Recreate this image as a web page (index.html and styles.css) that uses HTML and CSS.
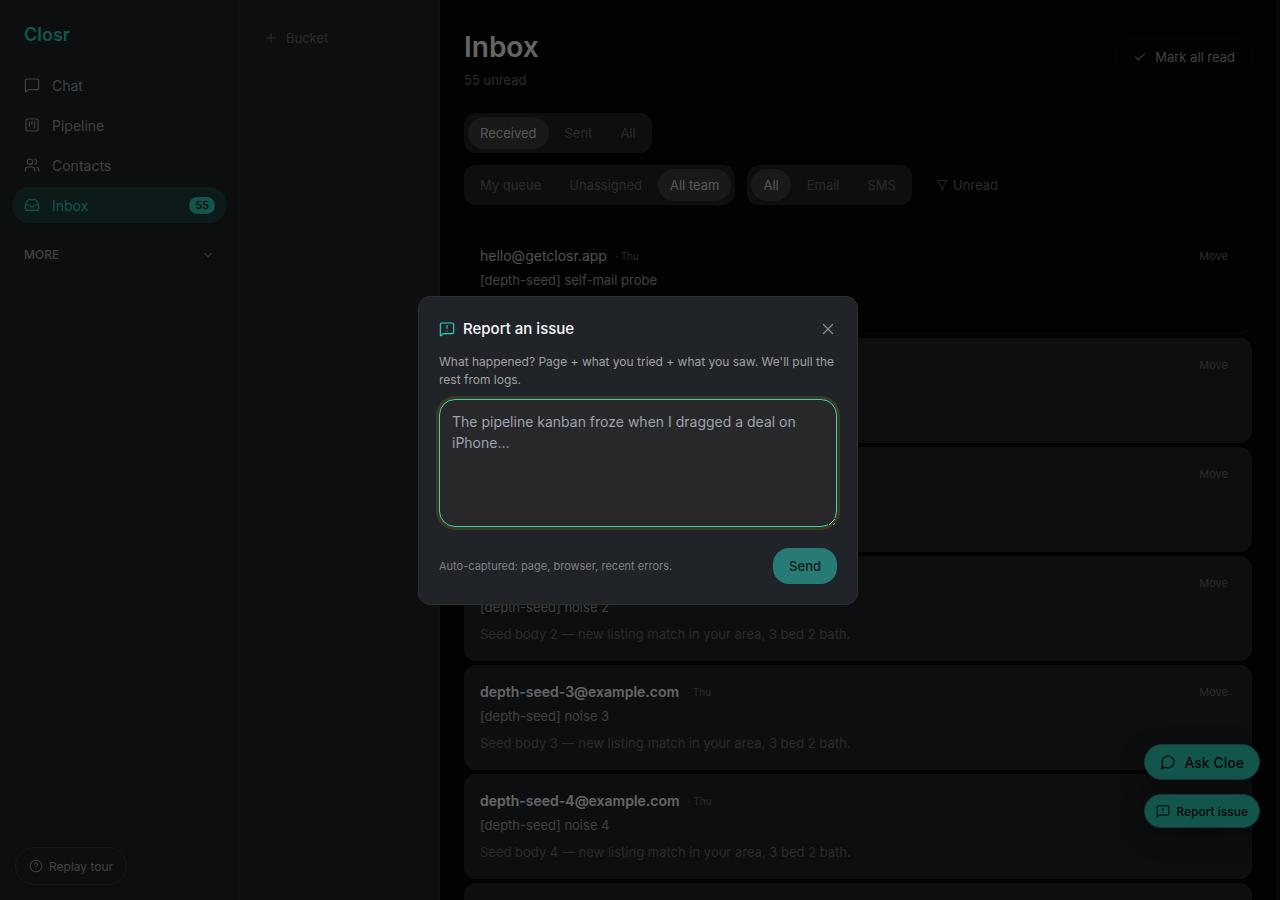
FILE: index.html
```
<!DOCTYPE html>
<html lang="en">
<head>
    <meta charset="UTF-8">
    <meta name="viewport" content="width=device-width, initial-scale=1.0">
    <title>Closr - Inbox</title>
    <link rel="stylesheet" href="styles.css">
</head>
<body>
    <svg class="icon-defs" aria-hidden="true">
        <symbol id="icon-report" viewBox="0 0 24 24">
            <path d="M22 17a2 2 0 0 1-2 2H6.828a2 2 0 0 0-1.414.586l-2.202 2.202A.71.71 0 0 1 2 21.286V5a2 2 0 0 1 2-2h16a2 2 0 0 1 2 2z"/>
            <path d="M12 7v4M12 15h.01"/>
        </symbol>
    </svg>

    <div class="app">
        <aside class="sidebar">
            <a class="brand" href="#">Closr</a>
            <nav class="nav">
                <a class="nav-item" href="#">
                    <svg class="icon" viewBox="0 0 24 24"><path d="M22 17a2 2 0 0 1-2 2H6.828a2 2 0 0 0-1.414.586l-2.202 2.202A.71.71 0 0 1 2 21.286V5a2 2 0 0 1 2-2h16a2 2 0 0 1 2 2z"/></svg>
                    Chat
                </a>
                <a class="nav-item" href="#">
                    <svg class="icon" viewBox="0 0 24 24"><rect x="3" y="3" width="18" height="18" rx="2"/><path d="M8 7v7M12 7v4M16 7v9"/></svg>
                    Pipeline
                </a>
                <a class="nav-item" href="#">
                    <svg class="icon" viewBox="0 0 24 24"><path d="M16 21v-2a4 4 0 0 0-4-4H6a4 4 0 0 0-4 4v2"/><circle cx="9" cy="7" r="4"/><path d="M22 21v-2a4 4 0 0 0-3-3.87M16 3.13a4 4 0 0 1 0 7.75"/></svg>
                    Contacts
                </a>
                <a class="nav-item active" href="#">
                    <svg class="icon" viewBox="0 0 24 24"><path d="M22 12h-6l-2 3h-4l-2-3H2"/><path d="M5.45 5.11 2 12v6a2 2 0 0 0 2 2h16a2 2 0 0 0 2-2v-6l-3.45-6.89A2 2 0 0 0 16.76 4H7.24a2 2 0 0 0-1.79 1.11z"/></svg>
                    Inbox
                    <span class="badge">55</span>
                </a>
            </nav>
            <button class="more" type="button">
                MORE
                <svg class="icon" viewBox="0 0 24 24"><path d="m6 9 6 6 6-6"/></svg>
            </button>
            <button class="replay" type="button">
                <svg class="icon" viewBox="0 0 24 24"><circle cx="12" cy="12" r="10"/><path d="M9.09 9a3 3 0 0 1 5.83 1c0 2-3 3-3 3M12 17h.01"/></svg>
                Replay tour
            </button>
        </aside>

        <aside class="buckets">
            <button class="add-bucket" type="button">
                <svg class="icon" viewBox="0 0 24 24"><path d="M5 12h14M12 5v14"/></svg>
                Bucket
            </button>
        </aside>

        <main class="main">
            <header class="page-header">
                <div>
                    <h1>Inbox</h1>
                    <p class="unread-count">55 unread</p>
                </div>
                <button class="mark-read" type="button">
                    <svg class="icon" viewBox="0 0 24 24"><path d="M20 6 9 17l-5-5"/></svg>
                    Mark all read
                </button>
            </header>

            <div class="filters">
                <div class="filter-row">
                    <div class="segmented">
                        <button class="selected" type="button">Received</button>
                        <button type="button">Sent</button>
                        <button type="button">All</button>
                    </div>
                </div>
                <div class="filter-row">
                    <div class="segmented">
                        <button type="button">My queue</button>
                        <button type="button">Unassigned</button>
                        <button class="selected" type="button">All team</button>
                    </div>
                    <div class="segmented">
                        <button class="selected" type="button">All</button>
                        <button type="button">Email</button>
                        <button type="button">SMS</button>
                    </div>
                    <button class="unread-filter" type="button">
                        <svg class="icon" viewBox="0 0 24 24"><path d="M10 20a1 1 0 0 0 .553.895l2 1A1 1 0 0 0 14 21v-7a2 2 0 0 1 .517-1.341L21.74 4.67A1 1 0 0 0 21 3H3a1 1 0 0 0-.742 1.67l7.225 7.989A2 2 0 0 1 10 14z"/></svg>
                        Unread
                    </button>
                </div>
            </div>

            <div class="thread-list">
                <article class="thread read">
                    <div class="thread-top">
                        <span class="sender">hello@getclosr.app</span>
                        <span class="date">· Thu</span>
                        <button class="move" type="button">Move</button>
                    </div>
                    <p class="subject">[depth-seed] self-mail probe</p>
                </article>
                <article class="thread">
                    <div class="thread-top">
                        <button class="move" type="button">Move</button>
                    </div>
                </article>
                <article class="thread">
                    <div class="thread-top">
                        <button class="move" type="button">Move</button>
                    </div>
                </article>
                <article class="thread">
                    <div class="thread-top">
                        <button class="move" type="button">Move</button>
                    </div>
                    <p class="subject">[depth-seed] noise 2</p>
                    <p class="preview">Seed body 2 — new listing match in your area, 3 bed 2 bath.</p>
                </article>
                <article class="thread">
                    <div class="thread-top">
                        <span class="sender">depth-seed-3@example.com</span>
                        <span class="date">· Thu</span>
                        <button class="move" type="button">Move</button>
                    </div>
                    <p class="subject">[depth-seed] noise 3</p>
                    <p class="preview">Seed body 3 — new listing match in your area, 3 bed 2 bath.</p>
                </article>
                <article class="thread">
                    <div class="thread-top">
                        <span class="sender">depth-seed-4@example.com</span>
                        <span class="date">· Thu</span>
                    </div>
                    <p class="subject">[depth-seed] noise 4</p>
                    <p class="preview">Seed body 4 — new listing match in your area, 3 bed 2 bath.</p>
                </article>
                <article class="thread"></article>
            </div>
        </main>
    </div>

    <div class="floating">
        <button class="fab ask" type="button">
            <svg class="icon" viewBox="0 0 24 24"><path d="M7.9 20A9 9 0 1 0 4 16.1L2 22z"/></svg>
            Ask Cloe
        </button>
        <button class="fab report" type="button">
            <svg class="icon"><use href="#icon-report"/></svg>
            Report issue
        </button>
    </div>

    <div class="overlay">
        <form class="modal" role="dialog" aria-modal="true" aria-labelledby="modalTitle">
            <div class="modal-header">
                <svg class="icon"><use href="#icon-report"/></svg>
                <h2 id="modalTitle">Report an issue</h2>
                <button class="close" type="button" aria-label="Close">
                    <svg class="icon" viewBox="0 0 24 24"><path d="M18 6 6 18M6 6l12 12"/></svg>
                </button>
            </div>
            <label class="help" for="issueText">What happened? Page + what you tried + what you saw. We'll pull the rest from logs.</label>
            <textarea id="issueText" placeholder="The pipeline kanban froze when I dragged a deal on iPhone…"></textarea>
            <div class="modal-footer">
                <span class="captured">Auto-captured: page, browser, recent errors.</span>
                <button class="send" type="button">Send</button>
            </div>
        </form>
    </div>
</body>
</html>
```
FILE: styles.css
```
:root {
    --bg: #060606;
    --surface: #202328;
    --raised: #3f3f43;
    --teal: #2dd4bf;
    --text: #fafafa;
    --muted: #a1a1a1;
    --faint: #6c6c6e;
}

* {
    box-sizing: border-box;
}

body {
    margin: 0;
    height: 100vh;
    overflow: hidden;
    background-color: var(--bg);
    color: var(--text);
    font-family: Inter, 'Liberation Sans', sans-serif;
    font-size: 13px;
}

h1, h2, p {
    margin: 0;
}

a {
    color: inherit;
    text-decoration: none;
}

button {
    display: inline-flex;
    align-items: center;
    border: none;
    padding: 0;
    background: none;
    color: inherit;
    font: inherit;
    white-space: nowrap;
    cursor: pointer;
}

.icon-defs {
    display: none;
}

.icon {
    flex: none;
    width: 16px;
    height: 16px;
    fill: none;
    stroke: currentColor;
    stroke-width: 1.75;
    stroke-linecap: round;
    stroke-linejoin: round;
}

.app {
    display: flex;
    height: 100vh;
}

/* Sidebar */
.sidebar {
    flex: none;
    display: flex;
    flex-direction: column;
    width: 240px;
    padding: 23px 12px 15px;
    background-color: var(--surface);
    border-right: 1px solid #282b30;
}

.brand {
    margin-bottom: 20px;
    padding: 0 12px;
    color: var(--teal);
    font-size: 18px;
    font-weight: 600;
    line-height: 24px;
}

.nav {
    display: flex;
    flex-direction: column;
    gap: 4px;
}

.nav-item {
    display: flex;
    align-items: center;
    gap: 12px;
    height: 36px;
    padding: 0 12px;
    border-radius: 18px;
    color: var(--muted);
    font-size: 14px;
}

.nav-item.active {
    background-color: #224243;
    color: var(--teal);
}

.badge {
    margin-left: auto;
    padding: 0 6px;
    border-radius: 9px;
    background-color: var(--teal);
    color: #0a0a0a;
    font-size: 11px;
    font-weight: 500;
    line-height: 17px;
}

.more {
    justify-content: space-between;
    margin-top: 22px;
    padding: 0 12px;
    color: var(--muted);
    font-size: 12px;
    font-weight: 500;
    line-height: 20px;
}

.more .icon {
    width: 14px;
    height: 14px;
}

.replay {
    align-self: flex-start;
    gap: 6px;
    height: 38px;
    margin-top: auto;
    margin-left: 3px;
    padding: 0 13px;
    border: 1px solid #393c40;
    border-radius: 19px;
    color: var(--muted);
    font-size: 12px;
}

.replay .icon {
    width: 14px;
    height: 14px;
}

/* Buckets */
.buckets {
    flex: none;
    width: 200px;
    padding: 26px 23px;
    background-color: var(--surface);
    border-right: 1px solid #282b30;
}

.add-bucket {
    gap: 7px;
    height: 24px;
    color: var(--faint);
}

/* Main */
.main {
    flex: 1;
    min-width: 0;
    padding: 28px 24px 0;
    overflow: hidden;
    border-right: 4px solid #161616;
}

.page-header {
    display: flex;
    justify-content: space-between;
    align-items: flex-start;
    margin-bottom: 23px;
}

h1 {
    font-size: 28px;
    font-weight: 600;
    line-height: 38px;
}

.unread-count {
    margin-top: 4px;
    color: var(--faint);
    line-height: 20px;
}

.mark-read {
    gap: 8px;
    height: 38px;
    margin-top: 10px;
    padding: 0 16px;
    border: 1px solid #0f0f0f;
    border-radius: 14px;
    color: var(--muted);
}

.mark-read .icon {
    width: 14px;
    height: 14px;
}

.filters {
    display: flex;
    flex-direction: column;
    gap: 12px;
    margin-bottom: 24px;
}

.filter-row {
    display: flex;
    gap: 12px;
}

.segmented {
    display: flex;
    gap: 4px;
    padding: 4px;
    border-radius: 12px;
    background-color: var(--surface);
}

.segmented button {
    height: 32px;
    padding: 0 12px;
    border-radius: 16px;
    color: var(--faint);
}

.segmented .selected {
    background-color: var(--raised);
    color: #d8d8d8;
}

.unread-filter {
    gap: 5px;
    padding: 0 12px;
    color: var(--faint);
}

.unread-filter .icon {
    width: 12px;
    height: 12px;
}

.thread-list {
    display: flex;
    flex-direction: column;
    gap: 4px;
}

.thread {
    min-height: 105px;
    padding: 15px;
    border: 1px solid #222529;
    border-radius: 12px;
    background-color: var(--surface);
}

.thread.read {
    border-color: transparent transparent #161616;
    background: none;
}

.thread-top {
    display: flex;
    align-items: center;
    line-height: 22px;
}

.sender {
    font-size: 14px;
    font-weight: 600;
}

.read .sender {
    color: #c8c8c8;
    font-weight: 400;
}

.date {
    margin-left: 8px;
    color: var(--faint);
    font-size: 10px;
}

.move {
    margin-left: auto;
    padding: 0 8px;
    color: var(--faint);
    font-size: 11px;
}

.subject {
    margin-top: 2px;
    color: var(--muted);
    line-height: 22px;
}

.preview {
    margin-top: 5px;
    color: var(--faint);
    line-height: 22px;
}

/* Floating buttons */
.floating {
    position: fixed;
    right: 20px;
    bottom: 72px;
    display: flex;
    flex-direction: column;
    gap: 14px;
}

.fab {
    justify-content: center;
    border: 1px solid #47857e;
    border-radius: 18px;
    background-color: var(--teal);
    box-shadow: 0 8px 24px rgba(0, 0, 0, 0.4);
    color: #0a0a0a;
    font-weight: 500;
}

.ask {
    gap: 8px;
    height: 36px;
    padding: 0 15px;
    font-size: 14px;
}

.report {
    gap: 6px;
    height: 34px;
    padding: 0 11px;
    font-size: 12px;
}

.report .icon {
    width: 14px;
    height: 14px;
}

/* Report dialog */
.overlay {
    position: fixed;
    inset: 0;
    display: flex;
    justify-content: center;
    align-items: center;
    padding: 0 4px 0 0;
    background-color: rgba(0, 0, 0, 0.6);
}

.modal {
    width: 440px;
    max-width: 100%;
    padding: 20px;
    border: 1px solid #2b2e32;
    border-radius: 12px;
    background-color: var(--surface);
}

.modal-header {
    display: flex;
    align-items: center;
    gap: 8px;
    margin-bottom: 12px;
}

.modal-header > .icon {
    color: var(--teal);
}

h2 {
    font-size: 15px;
    font-weight: 500;
    line-height: 24px;
}

.close {
    margin-left: auto;
    color: #8c8d8f;
}

.close .icon {
    width: 18px;
    height: 18px;
}

.help {
    display: block;
    margin-bottom: 10px;
    color: var(--muted);
    font-size: 12px;
    line-height: 18px;
}

textarea {
    display: block;
    width: 100%;
    height: 128px;
    padding: 11px 12px;
    border: 1px solid var(--teal);
    border-radius: 16px;
    outline: none;
    background-color: #28282a;
    box-shadow: 0 0 0 3px #41371f;
    color: var(--text);
    font-family: inherit;
    font-size: 14px;
    line-height: 21px;
    resize: vertical;
}

textarea::placeholder {
    color: #9ca3af;
}

.modal-footer {
    display: flex;
    justify-content: space-between;
    align-items: center;
    margin-top: 21px;
}

.captured {
    color: #7f8183;
    font-size: 11px;
}

.send {
    height: 36px;
    padding: 0 16px;
    border-radius: 16px;
    background-color: var(--teal);
    color: #0a0a0a;
    font-weight: 500;
    opacity: 0.5;
}
```
